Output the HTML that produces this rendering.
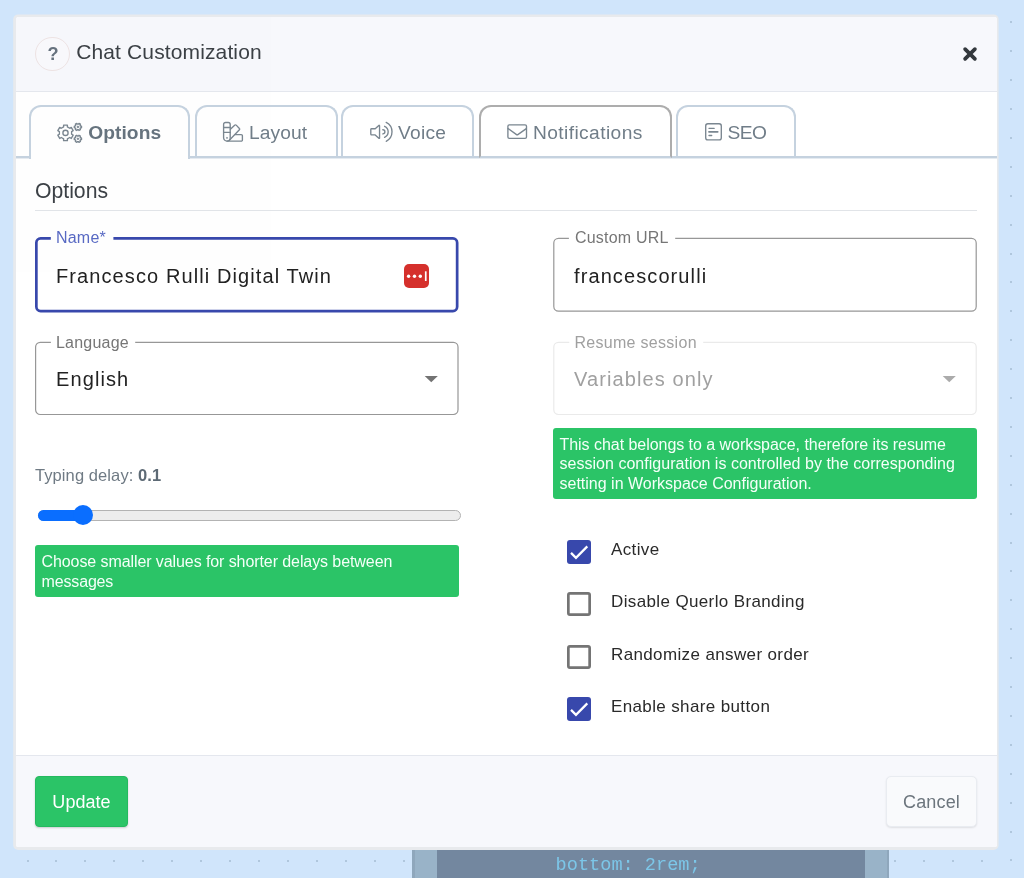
<!DOCTYPE html>
<html lang="en">
<head>
<meta charset="utf-8">
<title>Chat Customization</title>
<style>
*{box-sizing:border-box;margin:0;padding:0}
html,body{width:1024px;height:878px;overflow:hidden}
body{background:#d0e5fb;font-family:"Liberation Sans",sans-serif;position:relative;color:#222}
.abs{position:absolute}
.dot{position:absolute;width:2px;height:2px;background:#a6bcd3;border-radius:1px}
/* bottom code strip */
#strip{will-change:transform;opacity:.999;left:412px;top:849px;width:477px;height:29px;background:#99b3c8;border-left:3px solid #8fa7bc;border-right:2px solid #8fa7bc}
#strip .dark{position:absolute;left:22px;top:0;width:428px;height:29px;background:#73879f}
#strip .code{position:absolute;left:140.6px;top:5.6px;font:18.6px "Liberation Mono",monospace;color:#7cc6e8;white-space:pre}
/* modal */
#modal{will-change:transform;opacity:.999;left:16px;top:17px;width:980.6px;height:830px;background:#fff;border-radius:2.5px;overflow:hidden}
#hdr{left:0;top:0;width:981px;height:75px;background:#f7f8fc;border-bottom:1px solid #e4e7ee}
#ftr{left:0;top:738px;width:981px;height:92px;background:#f7f8fc;border-top:1px solid #e4e7ee}
#help{left:19px;top:20px;padding-left:1.6px;width:34.5px;height:34px;border-radius:17px;border:1px solid #eee3e3;background:#f9f9fc;color:#66727e;font-weight:700;font-size:18.2px;text-align:center;line-height:32.6px}
#title{left:60.2px;top:23.2px;font-size:21px;line-height:24px;color:#3b4045;white-space:pre;letter-spacing:.13px}
/* tabs */
.tab{position:absolute;top:88px;height:53px;border:2px solid #c5d2df;border-bottom:none;border-radius:12px 12px 0 0;background:#fff;color:#707d88;font-size:19.2px;line-height:22px;white-space:pre}
.tab span{position:absolute;top:15px}
.tab svg{position:absolute}
#tabline{left:0;top:139px;width:981px;height:2px;background:#c5d2df;z-index:2;box-shadow:0 1px 0 rgba(197,210,223,.45)}
#t1{left:13px;width:161px;height:54px;z-index:3;font-weight:700;color:#66737e}
#t2{left:179px;width:143px}
#t3{left:325px;width:133px}
#t4{left:463px;width:193px;height:53px;border-color:#adadad;border-bottom:2px solid #c5d2df;z-index:3}
#t5{left:660px;width:120px}
h2{position:absolute;left:19px;top:162px;font-size:21.2px;line-height:24px;font-weight:400;color:#3c4146}
#hr{left:19px;top:193px;width:942px;height:1px;background:#e1e4e8}
/* fields */
.fld{position:absolute;border:1px solid transparent;border-radius:5px}
.fld .lbl{position:absolute;top:-11px;left:21px;font-size:16px;line-height:19px;color:#767676;letter-spacing:.2px;white-space:pre}
.fld .val{position:absolute;left:20px;top:25px;font-size:20px;line-height:24px;color:#222;letter-spacing:1.1px;white-space:pre}
#f3 .val,#f4 .val{top:23px}
.fld .arr{position:absolute;right:20px;top:34px;width:0;height:0;border-left:6.5px solid transparent;border-right:6.5px solid transparent;border-top:6.5px solid #666}
#f1{left:19px;top:221px;width:424px;height:75px;border:2px solid transparent}
#f1 .lbl{color:#5869c3;top:-12px;left:19px}
#f1 .val{left:19px;top:24px}
#f2{left:537px;top:221px;width:424px;height:75px}
#f3{left:19px;top:326px;width:424px;height:73px}
#f3 .lbl{left:19.9px;top:-10.6px;letter-spacing:.23px}
#f4{left:537px;top:326px;width:424px;height:73px}
#f4 .lbl{color:#a0a0a0;letter-spacing:.3px;left:20.4px}
#f4 .val{color:#a0a0a0}
#f4 .arr{border-top-color:#a8a8a8}
#lp{left:388.4px;top:247px;width:25px;height:24.4px;border-radius:5px;background:#d5302c}
/* alerts */
.alert{position:absolute;background:#2bc467;color:#f4fff8;font-size:16px;line-height:19.2px;border-radius:3px;padding:6px 6.5px;white-space:pre;letter-spacing:0}
#a1{left:537px;top:411px;width:424px;height:71px;padding-top:7.1px}
#a2{left:19px;top:528px;width:424px;height:52px;padding-top:7.4px}
#typing{left:19px;top:448.5px;letter-spacing:.09px;font-size:16.5px;line-height:19px;color:#6f7a84;white-space:pre}
#typing b{color:#5d6a75}
#track{left:22px;top:493px;width:423px;height:11px;border-radius:6px;background:#ededed;border:1px solid #b3b3b3}
#fill{left:22px;top:493px;width:50px;height:11px;border-radius:6px;background:#0a6eff}
#thumb{left:56.6px;top:488px;width:20px;height:20.4px;border-radius:10.2px;background:#0a6eff}
/* checkboxes */
.cb{position:absolute;left:551px;width:24px;height:24px;border-radius:3px}
.cb.on{background:#3848ac;left:551.1px}
.cb svg{position:absolute;left:0;top:0}
.cbl{position:absolute;left:595px;font-size:17px;line-height:20px;color:#2a2a2a;letter-spacing:.37px;white-space:pre}
/* buttons */
#upd{left:19px;top:759px;width:93px;height:51px;border-radius:4px;background:#2bc467;border:1px solid #25b95f;color:#fff;font-size:18px;line-height:50.4px;letter-spacing:.05px;text-align:center;box-shadow:0 1px 2px rgba(0,0,0,.18)}
#can{left:870px;top:759px;width:91px;height:51px;border-radius:5px;background:#f9fafc;border:1px solid #e9ecf1;color:#6c757d;font-size:18px;letter-spacing:.15px;line-height:51px;text-align:center;box-shadow:0 1px 2px rgba(0,0,0,.1)}
</style>
</head>
<body>
<div id="dots"><i class="dot" style="left:1010.2px;top:21.3px"></i><i class="dot" style="left:1010.2px;top:50.2px"></i><i class="dot" style="left:1010.2px;top:79.1px"></i><i class="dot" style="left:1010.2px;top:108.0px"></i><i class="dot" style="left:1010.2px;top:136.9px"></i><i class="dot" style="left:1010.2px;top:165.8px"></i><i class="dot" style="left:1010.2px;top:194.7px"></i><i class="dot" style="left:1010.2px;top:223.6px"></i><i class="dot" style="left:1010.2px;top:252.5px"></i><i class="dot" style="left:1010.2px;top:281.4px"></i><i class="dot" style="left:1010.2px;top:310.3px"></i><i class="dot" style="left:1010.2px;top:339.2px"></i><i class="dot" style="left:1010.2px;top:368.1px"></i><i class="dot" style="left:1010.2px;top:397.0px"></i><i class="dot" style="left:1010.2px;top:425.9px"></i><i class="dot" style="left:1010.2px;top:454.8px"></i><i class="dot" style="left:1010.2px;top:483.7px"></i><i class="dot" style="left:1010.2px;top:512.6px"></i><i class="dot" style="left:1010.2px;top:541.5px"></i><i class="dot" style="left:1010.2px;top:570.4px"></i><i class="dot" style="left:1010.2px;top:599.3px"></i><i class="dot" style="left:1010.2px;top:628.2px"></i><i class="dot" style="left:1010.2px;top:657.1px"></i><i class="dot" style="left:1010.2px;top:686.0px"></i><i class="dot" style="left:1010.2px;top:714.9px"></i><i class="dot" style="left:1010.2px;top:743.8px"></i><i class="dot" style="left:1010.2px;top:772.7px"></i><i class="dot" style="left:1010.2px;top:801.6px"></i><i class="dot" style="left:1010.2px;top:830.5px"></i><i class="dot" style="left:1010.2px;top:859.4px"></i><i class="dot" style="left:26.5px;top:859.5px"></i><i class="dot" style="left:55.4px;top:859.5px"></i><i class="dot" style="left:84.4px;top:859.5px"></i><i class="dot" style="left:113.3px;top:859.5px"></i><i class="dot" style="left:142.2px;top:859.5px"></i><i class="dot" style="left:171.2px;top:859.5px"></i><i class="dot" style="left:200.1px;top:859.5px"></i><i class="dot" style="left:229.0px;top:859.5px"></i><i class="dot" style="left:257.9px;top:859.5px"></i><i class="dot" style="left:286.9px;top:859.5px"></i><i class="dot" style="left:315.8px;top:859.5px"></i><i class="dot" style="left:344.7px;top:859.5px"></i><i class="dot" style="left:373.7px;top:859.5px"></i><i class="dot" style="left:402.6px;top:859.5px"></i><i class="dot" style="left:894.4px;top:859.5px"></i><i class="dot" style="left:923.3px;top:859.5px"></i><i class="dot" style="left:952.3px;top:859.5px"></i><i class="dot" style="left:981.2px;top:859.5px"></i></div>
<div id="strip" class="abs"><div class="dark"></div><div class="code">bottom: 2rem;</div></div>

<svg class="abs" style="left:0;top:0" width="1024" height="878" viewBox="0 0 1024 878"><rect x="13.2" y="14.4" width="985.4" height="835.6" rx="5" fill="#e8eaed"/></svg>
<div id="modal" class="abs">
  <div id="hdr" class="abs">
    <div id="help" class="abs">?</div>
    <div id="title" class="abs">Chat Customization</div>
    <svg class="abs" style="left:946px;top:28.9px" width="16" height="16" viewBox="0 0 16 16"><path d="M3.1 3.1 L12.9 12.9 M12.9 3.1 L3.1 12.9" stroke="#33383d" stroke-width="3.7" stroke-linecap="round" fill="none"/></svg>
  </div>

  <div id="tabline" class="abs"></div>
  <div id="t1" class="tab"><span style="left:57.2px;letter-spacing:.08px">Options</span></div>
  <div id="t2" class="tab"><span style="left:52px;letter-spacing:.1px">Layout</span></div>
  <div id="t3" class="tab"><span style="left:55px;letter-spacing:.25px">Voice</span></div>
  <div id="t4" class="tab"><span style="left:52px;letter-spacing:.4px">Notifications</span></div>
  <div id="t5" class="tab"><span style="left:49.4px;letter-spacing:-.5px">SEO</span></div>

  <h2>Options</h2>
  <div id="hr" class="abs"></div>

  <div id="f1" class="fld"><div class="lbl">Name*</div><div class="val">Francesco Rulli Digital Twin</div></div>
  <div id="lp" class="abs"><svg width="25" height="24" viewBox="0 0 25 24"><circle cx="4.6" cy="12.2" r="1.7" fill="#fff"/><circle cx="10.5" cy="12.2" r="1.7" fill="#fff"/><circle cx="16.3" cy="12.2" r="1.7" fill="#fff"/><rect x="20.9" y="7.2" width="1.7" height="9.8" rx=".5" fill="#fff"/></svg></div>
  <div id="f2" class="fld"><div class="lbl">Custom URL</div><div class="val">francescorulli</div></div>
  <div id="f3" class="fld"><div class="lbl">Language</div><div class="val">English</div></div>
  <div id="f4" class="fld"><div class="lbl">Resume session</div><div class="val">Variables only</div></div>

  <div id="a1" class="alert"><span style="letter-spacing:-.042px">This chat belongs to a workspace, therefore its resume</span>
<span style="letter-spacing:.025px">session configuration is controlled by the corresponding</span>
setting in Workspace Configuration.</div>

  <div id="typing" class="abs">Typing delay: <b>0.1</b></div>
  <div id="track" class="abs"></div>
  <div id="fill" class="abs"></div>
  <div id="thumb" class="abs"></div>
  <div id="a2" class="alert"><span style="letter-spacing:-.085px">Choose smaller values for shorter delays between</span>
<span style="letter-spacing:-.15px">messages</span></div>

  <div class="cb on" style="top:522.7px"><svg width="24" height="24" viewBox="0 0 24 24"><path d="M4.0 12.9 L8.97 17.85 L20.3 6.4" stroke="#fff" stroke-width="2.25" fill="none"/></svg></div>
  <div class="cbl" style="top:522.7px">Active</div>
  <div class="cb" style="top:575.1px"><svg width="24" height="24" viewBox="0 0 24 24"><rect x="1.35" y="1.35" width="21.3" height="21.3" rx="1.6" fill="#fff" stroke="#747474" stroke-width="2.7"/></svg></div>
  <div class="cbl" style="top:575.2px">Disable Querlo Branding</div>
  <div class="cb" style="top:628.1px"><svg width="24" height="24" viewBox="0 0 24 24"><rect x="1.35" y="1.35" width="21.3" height="21.3" rx="1.6" fill="#fff" stroke="#747474" stroke-width="2.7"/></svg></div>
  <div class="cbl" style="top:627.9px">Randomize answer order</div>
  <div class="cb on" style="top:680.2px"><svg width="24" height="24" viewBox="0 0 24 24"><path d="M4.0 12.9 L8.97 17.85 L20.3 6.4" stroke="#fff" stroke-width="2.25" fill="none"/></svg></div>
  <div class="cbl" style="top:680.2px">Enable share button</div>

  <div id="ftr" class="abs"></div>
  <div id="upd" class="abs">Update</div>
  <div id="can" class="abs">Cancel</div>
</div>
<svg id="flds" width="1024" height="878" viewBox="0 0 1024 878" style="position:absolute;left:0;top:0;pointer-events:none;z-index:9" fill="none">
<path d="M113.40 238.45 H452.90 A4.25 4.25 0 0 1 457.15 242.70 V306.80 A4.25 4.25 0 0 1 452.90 311.05 H40.60 A4.25 4.25 0 0 1 36.35 306.80 V242.70 A4.25 4.25 0 0 1 40.60 238.45 H50.80" stroke="#3848ac" stroke-width="2.7" stroke-linecap="butt"/>
<path d="M675.20 238.30 H971.50 A4.70 4.70 0 0 1 976.20 243.00 V306.50 A4.70 4.70 0 0 1 971.50 311.20 H558.50 A4.70 4.70 0 0 1 553.80 306.50 V243.00 A4.70 4.70 0 0 1 558.50 238.30 H568.90" stroke="#979797" stroke-width="1.2" stroke-linecap="butt"/>
<path d="M135.20 342.30 H453.30 A4.70 4.70 0 0 1 458.00 347.00 V409.80 A4.70 4.70 0 0 1 453.30 414.50 H40.30 A4.70 4.70 0 0 1 35.60 409.80 V347.00 A4.70 4.70 0 0 1 40.30 342.30 H50.90" stroke="#979797" stroke-width="1.2" stroke-linecap="butt"/>
<path d="M703.20 342.30 H971.50 A4.70 4.70 0 0 1 976.20 347.00 V409.80 A4.70 4.70 0 0 1 971.50 414.50 H558.50 A4.70 4.70 0 0 1 553.80 409.80 V347.00 A4.70 4.70 0 0 1 558.50 342.30 H569.30" stroke="#eaeaea" stroke-width="1.2" stroke-linecap="butt"/>
<path d="M424.7 375.9 H437.8 L431.25 382.35 Z" fill="#737373"/>
<path d="M942.7 375.9 H955.8 L949.25 382.35 Z" fill="#ababab"/>
</svg>
<svg id="icons" width="1024" height="878" viewBox="0 0 1024 878" style="position:absolute;left:0;top:0;pointer-events:none;z-index:10" fill="none" stroke="#7a8690" stroke-width="1.35" stroke-linecap="round" stroke-linejoin="round">
<path d="M67.38 126.94 L67.40 125.13 L63.60 125.13 L63.62 126.94 L61.28 128.29 L59.72 127.37 L57.82 130.66 L59.40 131.54 L59.40 134.26 L57.82 135.14 L59.72 138.43 L61.28 137.51 L63.62 138.86 L63.60 140.67 L67.40 140.67 L67.38 138.86 L69.72 137.51 L71.28 138.43 L73.18 135.14 L71.60 134.26 L71.60 131.54 L73.18 130.66 L71.28 127.37 L69.72 128.29 Z"/>
<circle cx="65.5" cy="132.9" r="2.6"/>
<path d="M80.68 127.74 L81.50 127.74 L81.50 126.06 L80.68 126.06 L80.01 124.91 L80.43 124.20 L78.97 123.36 L78.56 124.08 L77.24 124.08 L76.83 123.36 L75.37 124.20 L75.79 124.91 L75.12 126.06 L74.30 126.06 L74.30 127.74 L75.12 127.74 L75.79 128.89 L75.37 129.60 L76.83 130.44 L77.24 129.72 L78.56 129.72 L78.97 130.44 L80.43 129.60 L80.01 128.89 Z"/>
<path d="M80.68 139.64 L81.50 139.64 L81.50 137.96 L80.68 137.96 L80.01 136.81 L80.43 136.10 L78.97 135.26 L78.56 135.98 L77.24 135.98 L76.83 135.26 L75.37 136.10 L75.79 136.81 L75.12 137.96 L74.30 137.96 L74.30 139.64 L75.12 139.64 L75.79 140.79 L75.37 141.50 L76.83 142.34 L77.24 141.62 L78.56 141.62 L78.97 142.34 L80.43 141.50 L80.01 140.79 Z"/>
<circle cx="77.9" cy="126.9" r="0.9" fill="#7a8690" stroke-width="0.6"/>
<circle cx="77.9" cy="138.8" r="0.9" fill="#7a8690" stroke-width="0.6"/>
<path d="M223.6 124.4 a1.9 1.9 0 0 1 1.9 -1.9 h2.8 a1.9 1.9 0 0 1 1.9 1.9 v13.4 a3.3 3.3 0 0 1 -6.6 0 Z"/>
<path d="M223.6 127.5 h6.6 M223.6 132.4 h6.6"/>
<circle cx="226.9" cy="137.9" r="0.55" fill="#7a8690" stroke-width="0.5"/>
<path d="M230.4 129.3 L234.9 125.1 a0.9 0.9 0 0 1 1.3 0 L239.4 128.5 a0.9 0.9 0 0 1 0 1.3 L229.6 140.0"/>
<path d="M235.2 134.6 H241.2 a1.2 1.2 0 0 1 1.2 1.2 V139.9 a1.2 1.2 0 0 1 -1.2 1.2 H227"/>
<path d="M371.6 128.7 H375.2 L378.8 125.4 a0.45 0.45 0 0 1 0.75 0.35 V137.9 a0.45 0.45 0 0 1 -0.75 0.35 L375.2 134.9 H371.6 a0.8 0.8 0 0 1 -0.8 -0.8 V129.5 a0.8 0.8 0 0 1 0.8 -0.8 Z"/>
<path d="M382.8 129.7 A2.1 2.1 0 0 1 382.8 133.9"/>
<path d="M384.6 126.3 A6.1 6.1 0 0 1 384.6 137.4"/>
<path d="M386.2 122.4 A10.6 10.6 0 0 1 386.2 141.3"/>
<rect x="507.9" y="124.9" width="18.6" height="13.4" rx="1.4"/>
<path d="M508.1 128.6 L516.2 134.4 a1.7 1.7 0 0 0 2 0 L526.3 128.6"/>
<rect x="705.7" y="123.7" width="15.6" height="16.2" rx="2.2"/>
<path d="M709 128.3 H714.2 M709 135.5 H711.7"/>
<path d="M709 131.8 H717.7" stroke-width="1.8"/>
</svg>
</body>
</html>
